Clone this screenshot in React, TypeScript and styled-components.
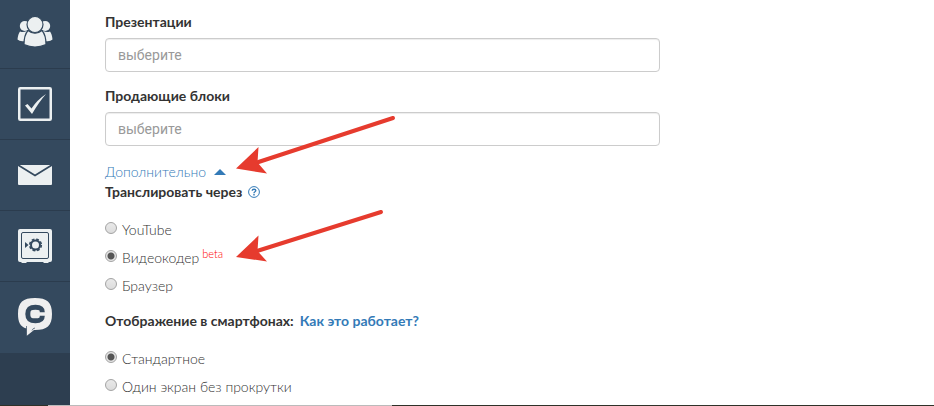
import React, { useState } from "react";
import styled, { createGlobalStyle } from "styled-components";

const GlobalStyle = createGlobalStyle`
  *, *::before, *::after { box-sizing: border-box; }
  body {
    margin: 0;
    background: #fff;
    color: #333;
    font: 14px/20px "Lato", "Open Sans", sans-serif;
  }
`;

const Page = styled.div`
  display: flex;
  flex-direction: column;
  min-height: 100vh;
`;

const Body = styled.div`
  display: flex;
  flex: 1;
`;

const Rail = styled.nav`
  flex: 0 0 70px;
  background: #2d3e50;
`;

const RailButton = styled.button`
  display: flex;
  align-items: center;
  justify-content: center;
  width: 100%;
  height: 71px;
  padding: 0;
  border: 0;
  border-bottom: 1px solid #2b3c4e;
  background: #34495e;
  color: #ecf0f1;
  cursor: pointer;

  &:first-child { height: 69px; padding-bottom: 4px; }
  &:last-child { border-bottom-color: #34495e; }
`;

const Form = styled.form`
  flex: 1;
  min-width: 0;
  padding: 12px 35px 7px;
`;

const Field = styled.div`
  max-width: 555px;
  margin-bottom: 14px;
`;

const FieldLabel = styled.label`
  display: block;
  margin-bottom: 6px;
  font-weight: 700;
`;

const TextInput = styled.input`
  display: block;
  width: 100%;
  height: 34px;
  padding: 6px 12px;
  border: 1px solid #ccc;
  border-radius: 4px;
  box-shadow: inset 0 1px 1px rgba(0, 0, 0, 0.075);
  font: 14px/20px Roboto, sans-serif;

  &::placeholder { color: #999; opacity: 1; }
`;

const More = styled.button`
  display: flex;
  align-items: center;
  gap: 8px;
  margin-top: 16px;
  padding: 0;
  border: 0;
  background: none;
  color: #337ab7;
  font: inherit;
  font-weight: 300;
  cursor: pointer;
`;

const Options = styled.fieldset`
  margin: 0 0 15px;
  padding: 0;
  border: 0;

  &:last-child { margin-bottom: 0; }
`;

const Heading = styled.legend`
  display: flex;
  align-items: center;
  gap: 6px;
  margin-bottom: 18px;
  padding: 0;
  font-weight: 700;
`;

const Link = styled.a`
  display: inline-flex;
  color: #337ab7;
  text-decoration: none;
`;

const Option = styled.label`
  display: flex;
  align-items: flex-start;
  gap: 5px;
  font-weight: 300;
  & + & { margin-top: 8px; }
`;

const Radio = styled.input`
  appearance: none;
  width: 12px;
  height: 12px;
  margin: 2px 0 0;
  border: 1px solid #a3a3a3;
  border-radius: 50%;
  background: linear-gradient(#e9e9e9, #dcdcdc);

  &:checked {
    background: radial-gradient(circle, #555 0 3px, #e4e4e4 4px);
  }
`;

const Beta = styled.sup`
  margin-left: 3px;
  color: #f00;
  font-size: 11px;
  line-height: 0;
  vertical-align: 5px;
`;

const Strip = styled.footer`
  display: flex;
  height: 1px;
  background: #2f3128;

  &::before {
    content: "";
    width: 344px;
    margin-left: 48px;
    background: #bbb;
  }
`;

const Arrows = styled.svg`
  position: absolute;
  top: 105px;
  left: 230px;
  pointer-events: none;
`;

const PeopleIcon = () => (
  <svg width="36" height="32" viewBox="0 0 36 32" fill="currentColor" aria-hidden="true">
    <circle cx="7.8" cy="10" r="5" />
    <circle cx="28.2" cy="10" r="5" />
    <path d="M3 15.500Q7 17 10 14.500L8 25Q3 26 .5 23.500Q1 18 3 15.500ZM33 15.500Q29 17 26 14.500L28 25Q33 26 35.500 23.500Q35 18 33 15.500Z" />
    <path stroke="#34495e" strokeWidth="1.200" d="M11 14.500Q18 20 25 14.500Q29 19 29 28.500Q18 33.500 7 28.500Q7 19 11 14.500Z" />
    <circle cx="18" cy="8.500" r="8" stroke="#34495e" strokeWidth="1.200" />
  </svg>
);

const CheckIcon = () => (
  <svg width="34" height="34" viewBox="0 0 34 34" aria-hidden="true">
    <rect x="1.250" y="1.250" width="31.500" height="31.500" rx="1" fill="none" stroke="#ecf0f1" strokeWidth="2.500" />
    <path d="M7 18.500L9.500 17L13.500 21.500Q19 13 28 7Q21 15 14 27Q10 22 7 18.500Z" fill="currentColor" />
  </svg>
);

const MailIcon = () => (
  <svg width="34" height="20" viewBox="0 0 34 20" aria-hidden="true">
    <rect width="34" height="20" rx="1" fill="currentColor" />
    <path d="M0 0L17 10.500L34 0" fill="none" stroke="#34495e" strokeWidth="1.800" />
  </svg>
);

const SafeIcon = () => (
  <svg width="34" height="34" viewBox="0 0 34 34" aria-hidden="true">
    <path d="M2 0H32Q34 0 34 2V31Q34 33 32 33H31L30 34H26L25 33H9L8 34H4L3 33H2Q0 33 0 31V2Q0 0 2 0Z" fill="currentColor" />
    <rect x="3.500" y="3.500" width="27" height="26" rx="1.500" fill="none" stroke="#34495e" />
    <path d="M7 13L10.500 16L7 19Z" fill="#34495e" />
    <circle cx="17.500" cy="16" r="4.500" fill="none" stroke="#34495e" strokeWidth="2" />
    <circle cx="17.500" cy="16" r="5.800" fill="none" stroke="#34495e" strokeWidth="1.600" strokeDasharray="2.755 1.800" />
  </svg>
);

const ChatIcon = () => (
  <svg width="34" height="38" viewBox="0 0 34 38" aria-hidden="true">
    <path d="M17 0C29 0 34 4 34 16S29 32 17 32H16L8.500 38V30.500C2 28.500 0 24 0 16C0 4 5 0 17 0Z" fill="#efefef" />
    <path d="M24.300 14.200C24.300 10 22 9.200 17.500 9.200C11.500 9.200 9.800 11 9.800 16S11.500 22.800 17.500 22.800C22 22.800 24.300 22 24.300 17.800" fill="none" stroke="#34495e" strokeWidth="5" />
    <path d="M8.500 28V38M17 30Q15 30 14 32.500" fill="none" stroke="#34495e" strokeWidth=".7" />
  </svg>
);

const HelpIcon = () => (
  <svg width="12" height="12" viewBox="0 0 12 12" fill="none" stroke="currentColor" aria-hidden="true">
    <circle cx="6" cy="6" r="5.400" strokeWidth="1" />
    <path d="M4.200 4.800Q4.200 3.200 6 3.200Q7.800 3.200 7.800 4.600Q7.800 5.400 6.700 6Q6 6.400 6 7.200M6 8.100V9.400" strokeWidth="1.400" />
  </svg>
);

const rail = [
  ["Контакты", PeopleIcon],
  ["Задачи", CheckIcon],
  ["Почта", MailIcon],
  ["Финансы", SafeIcon],
  ["Чат", ChatIcon],
] as const;

const streams = ["YouTube", "Видеокодер", "Браузер"];
const views = ["Стандартное", "Один экран без прокрутки"];

export default function App() {
  const [open, setOpen] = useState(true);
  return (
    <Page>
      <GlobalStyle />
      <Body>
        <Rail>
          {rail.map(([name, Icon]) => (
            <RailButton key={name} type="button" aria-label={name}>
              <Icon />
            </RailButton>
          ))}
        </Rail>
        <Form>
          <Field>
            <FieldLabel htmlFor="presentations">Презентации</FieldLabel>
            <TextInput id="presentations" placeholder="выберите" />
          </Field>
          <Field>
            <FieldLabel htmlFor="blocks">Продающие блоки</FieldLabel>
            <TextInput id="blocks" placeholder="выберите" />
          </Field>
          <More type="button" aria-expanded={open} onClick={() => setOpen(!open)}>
            Дополнительно
            <svg width="12" height="6" viewBox="0 0 12 6" fill="currentColor" aria-hidden="true">
              <path d="M0 6L6 0L12 6Z" />
            </svg>
          </More>
          {open && (
            <>
              <Options>
                <Heading>
                  Транслировать через
                  <Link href="#help" aria-label="Справка">
                    <HelpIcon />
                  </Link>
                </Heading>
                {streams.map((name) => (
                  <Option key={name}>
                    <Radio type="radio" name="stream" defaultChecked={name === "Видеокодер"} />
                    <span>
                      {name}
                      {name === "Видеокодер" && <Beta>beta</Beta>}
                    </span>
                  </Option>
                ))}
              </Options>
              <Options>
                <Heading>
                  Отображение в смартфонах:
                  <Link href="#how">Как это работает?</Link>
                </Heading>
                {views.map((name) => (
                  <Option key={name}>
                    <Radio type="radio" name="view" defaultChecked={name === "Стандартное"} />
                    <span>{name}</span>
                  </Option>
                ))}
              </Options>
            </>
          )}
        </Form>
      </Body>
      <Strip />
      <Arrows width="170" height="165" viewBox="0 0 170 165" fill="#e63b2e" stroke="#e63b2e" aria-hidden="true">
        <path d="M163 13L27 57.500" strokeWidth="4" strokeLinecap="round" />
        <path d="M6 63.500L28.500 42L27.500 57.500L37 68.500Z" stroke="none" />
        <path d="M151 107L27 146" strokeWidth="4" strokeLinecap="round" />
        <path d="M6 152L28.500 130.500L27.500 146L37 156.500Z" stroke="none" />
      </Arrows>
    </Page>
  );
}
